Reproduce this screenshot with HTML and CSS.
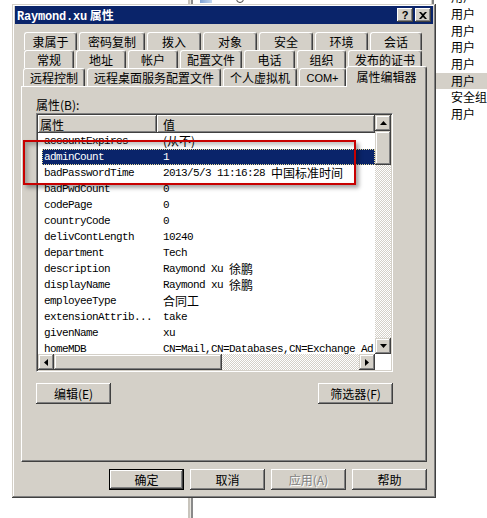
FILE: index.html
```html
<!DOCTYPE html>
<html>
<head>
<meta charset="utf-8">
<title>Raymond.xu 属性</title>
<link rel="stylesheet" href="styles.css">
</head>
<body>
<div class="desk">
  <div class="bg-split"></div>
  <div class="bg-icon"></div>
  <div class="bg-arc"></div>
  <div class="bg-edge"></div>
  <ul class="bg-list">
    <li>用户</li>
    <li>用户</li>
    <li>用户</li>
    <li>用户</li>
    <li>用户</li>
    <li class="sel">用户</li>
    <li>安全组</li>
    <li>用户</li>
  </ul>

  <div class="dialog">
    <div class="titlebar">
      <span class="title"><span class="t-en">Raymond.xu</span> 属性</span>
      <div class="tbtns">
        <span class="tb tb-q">?</span>
        <span class="tb tb-x"><svg width="8" height="7" viewBox="0 0 8 7"><path d="M0 0h2l2 2 2-2h2L5 3.5 8 7H6L4 5 2 7H0l3-3.5z" fill="#000"/></svg></span>
      </div>
    </div>

    <div class="tabs">
      <div class="tabrow">
        <span class="tab w53">隶属于</span>
        <span class="tab w66">密码复制</span>
        <span class="tab w54">拨入</span>
        <span class="tab w54">对象</span>
        <span class="tab w54">安全</span>
        <span class="tab w53">环境</span>
        <span class="tab w52">会话</span>
      </div>
      <div class="tabrow">
        <span class="tab w50">常规</span>
        <span class="tab w50">地址</span>
        <span class="tab w50">帐户</span>
        <span class="tab w62">配置文件</span>
        <span class="tab w51">电话</span>
        <span class="tab w49">组织</span>
        <span class="tab w74">发布的证书</span>
      </div>
      <div class="tabrow front">
        <span class="tab w62">远程控制</span>
        <span class="tab w134">远程桌面服务配置文件</span>
        <span class="tab w74">个人虚拟机</span>
        <span class="tab w47 latin">COM+</span>
        <span class="tab active">属性编辑器</span>
      </div>
    </div>

    <div class="panel">
      <div class="lbl">属性(B):</div>
      <div class="lv">
        <div class="lv-main">
          <div class="lv-head">
            <div class="hc c1">属性</div>
            <div class="hc c2">值</div>
          </div>
          <div class="lv-rows">
            <div class="row"><span class="n">accountExpires</span><span class="v"><span class="cj">(从不)</span></span></div>
            <div class="row sel"><span class="n">adminCount</span><span class="v">1</span></div>
            <div class="row"><span class="n">badPasswordTime</span><span class="v">2013/5/3 11:16:28&nbsp;<span class="cj">中国标准时间</span></span></div>
            <div class="row"><span class="n">badPwdCount</span><span class="v">0</span></div>
            <div class="row"><span class="n">codePage</span><span class="v">0</span></div>
            <div class="row"><span class="n">countryCode</span><span class="v">0</span></div>
            <div class="row"><span class="n">delivContLength</span><span class="v">10240</span></div>
            <div class="row"><span class="n">department</span><span class="v">Tech</span></div>
            <div class="row"><span class="n">description</span><span class="v">Raymond Xu&nbsp;<span class="cj">徐鹏</span></span></div>
            <div class="row"><span class="n">displayName</span><span class="v">Raymond xu&nbsp;<span class="cj">徐鹏</span></span></div>
            <div class="row"><span class="n">employeeType</span><span class="v"><span class="cj">合同工</span></span></div>
            <div class="row"><span class="n">extensionAttrib...</span><span class="v">take</span></div>
            <div class="row"><span class="n">givenName</span><span class="v">xu</span></div>
            <div class="row"><span class="n">homeMDB</span><span class="v">CN=Mail,CN=Databases,CN=Exchange Ad</span></div>
          </div>
        </div>
        <div class="vscroll">
          <span class="sbtn"><svg width="7" height="4" viewBox="0 0 7 4"><path d="M3.5 0L7 4H0z" fill="#000"/></svg></span>
          <span class="vthumb"></span>
          <span class="track"></span>
          <span class="sbtn"><svg width="7" height="4" viewBox="0 0 7 4"><path d="M0 0h7L3.5 4z" fill="#000"/></svg></span>
        </div>
        <div class="hscroll">
          <span class="sbtn"><svg width="4" height="7" viewBox="0 0 4 7"><path d="M4 0v7L0 3.5z" fill="#000"/></svg></span>
          <span class="hthumb"></span>
          <span class="track"></span>
          <span class="sbtn"><svg width="4" height="7" viewBox="0 0 4 7"><path d="M0 0l4 3.5L0 7z" fill="#000"/></svg></span>
        </div>
        <div class="corner"></div>
      </div>
      <div class="prow">
        <span class="btn">编辑(E)</span>
        <span class="btn">筛选器(F)</span>
      </div>
      <div class="mark"></div>
    </div>

    <div class="brow">
      <span class="btn def">确定</span>
      <span class="btn">取消</span>
      <span class="btn dis">应用(A)</span>
      <span class="btn">帮助</span>
    </div>
  </div>
</div>
</body>
</html>
```

FILE: styles.css
```css
html, body {
  margin: 0;
  padding: 0;
  background: #fff;
}

.desk {
  position: relative;
  width: 487px;
  height: 518px;
  overflow: hidden;
  background: #fff;
  font-family: "Noto Sans CJK SC", "Liberation Sans", sans-serif;
  font-size: 12px;
  color: #000;
  display: flex;
  align-items: flex-start;
}

/* ---------- background window bits ---------- */
.bg-split {
  position: absolute;
  left: 188px;
  top: 0;
  width: 5px;
  height: 518px;
  background: linear-gradient(to right, #c8c4bc 0 2px, #e8e6e0 2px 3px, #8a8a8a 3px 5px);
}
.bg-icon {
  position: absolute;
  left: 200px;
  top: 0;
  width: 12px;
  height: 3px;
  background: linear-gradient(to right, #7fa2d4, #c4d8f0);
}
.bg-arc {
  position: absolute;
  left: 236px;
  top: -5px;
  width: 6px;
  height: 6px;
  border: 1px solid #444;
  border-radius: 50%;
}
.bg-edge {
  position: absolute;
  left: 431px;
  top: 0;
  width: 3px;
  height: 5px;
  background: linear-gradient(to right, #d4d0c8 0 1px, #808080 1px 3px);
}
.bg-list {
  position: absolute;
  left: 436px;
  top: -10.8px;
  width: 51px;
  margin: 0;
  padding: 0;
  list-style: none;
  font-size: 12px;
}
.bg-list li {
  height: 16.7px;
  line-height: 16.7px;
  padding-left: 15px;
  white-space: nowrap;
  overflow: hidden;
}
.bg-list li.sel {
  background: #d4d0c8;
}

/* ---------- dialog ---------- */
.dialog {
  position: relative;
  z-index: 1;
  margin: 4px 0 0 12px;
  width: 424px;
  height: 494px;
  box-sizing: border-box;
  padding: 2px 3px 3px 3px;
  background: #d4d0c8;
  box-shadow: inset -1px -1px #404040, inset 1px 1px #d4d0c8, inset -2px -2px #808080, inset 2px 2px #fff;
  display: flex;
  flex-direction: column;
}

.titlebar {
  height: 18px;
  background: #0a246a;
  display: flex;
  align-items: center;
  justify-content: space-between;
  padding: 0 2px 0 2px;
}
.title {
  color: #fff;
  font-weight: bold;
  font-size: 12px;
  white-space: nowrap;
}
.t-en {
  font-family: "Liberation Mono", monospace;
  letter-spacing: -0.2px;
}
.tbtns {
  display: flex;
  gap: 2px;
}
.tb {
  width: 16px;
  height: 14px;
  box-sizing: border-box;
  background: #d4d0c8;
  box-shadow: inset -1px -1px #404040, inset 1px 1px #fff, inset -2px -2px #808080;
  display: flex;
  align-items: center;
  justify-content: center;
}
.tb-q {
  font-family: "Liberation Sans", sans-serif;
  font-weight: bold;
  font-size: 11px;
  line-height: 14px;
  padding-bottom: 1px;
}

/* ---------- tabs ---------- */
.tabs {
  margin: 8px 0 0 9px;
}
.tabrow {
  display: flex;
  height: 18px;
}
.tabrow.front {
  margin-left: -1px;
}
.tab {
  box-sizing: border-box;
  height: 18px;
  margin-right: 2px;
  border-top: 1px solid #fff;
  border-left: 1px solid #fff;
  border-right: 1px solid #404040;
  border-radius: 3px 3px 0 0;
  box-shadow: inset -1px 0 #808080;
  display: flex;
  align-items: center;
  justify-content: center;
  white-space: nowrap;
  font-size: 12px;
  background: #d4d0c8;
}
.tab.latin {
  font-family: "Liberation Sans", sans-serif;
  font-size: 11px;
}
.w47 { width: 47px; }
.w49 { width: 49px; }
.w50 { width: 50px; }
.w51 { width: 51px; }
.w52 { width: 52px; }
.w53 { width: 53px; }
.w54 { width: 54px; }
.w62 { width: 62px; }
.w66 { width: 66px; }
.w74 { width: 74px; }
.w134 { width: 134px; }
.tab.active {
  position: relative;
  z-index: 2;
  width: 81px;
  height: 21px;
  margin-top: -2px;
  margin-left: -2px;
  margin-right: 0;
  padding-bottom: 2px;
}

/* ---------- panel ---------- */
.panel {
  position: relative;
  margin-left: 6px;
  width: 406px;
  height: 376px;
  box-sizing: border-box;
  border-top: 1px solid #fff;
  border-left: 1px solid #fff;
  border-right: 1px solid #404040;
  border-bottom: 1px solid #404040;
  box-shadow: inset -1px -1px #808080;
  padding: 11px 32px 0 14px;
}
.lbl {
  height: 14px;
  line-height: 14px;
  margin-bottom: 1px;
  font-size: 12px;
}

.lv {
  width: 357px;
  height: 259px;
  box-sizing: border-box;
  border-top: 1px solid #808080;
  border-left: 1px solid #808080;
  border-right: 1px solid #fff;
  border-bottom: 1px solid #fff;
  box-shadow: inset 1px 1px #404040, inset -1px -1px #d4d0c8;
  padding: 1px;
  background: #fff;
  display: grid;
  grid-template-columns: 337px 16px;
  grid-template-rows: 239px 16px;
}
.lv-main {
  overflow: hidden;
}
.lv-head {
  display: flex;
  height: 18px;
}
.hc {
  box-sizing: border-box;
  height: 18px;
  background: #d4d0c8;
  box-shadow: inset -1px -1px #404040, inset 1px 1px #fff, inset -2px -2px #808080;
  display: flex;
  align-items: center;
  font-size: 12px;
}
.hc.c1 {
  width: 119px;
  padding-left: 2px;
}
.hc.c2 {
  flex: 1;
  padding-left: 6px;
}
.lv-rows {
  font-family: "Liberation Mono", monospace;
  font-size: 11px;
  letter-spacing: -0.6px;
}
.row {
  height: 16px;
  box-sizing: border-box;
  margin-left: 4px;
  padding-left: 2px;
  display: flex;
  align-items: center;
  white-space: nowrap;
  overflow: hidden;
}
.row .n {
  width: 119px;
  flex: none;
  line-height: 14px;
}
.row .v {
  flex: none;
  display: flex;
  align-items: center;
  line-height: 14px;
}
.row.sel {
  background: #0a246a;
  color: #fff;
  border: 1px dotted #e8dc9a;
  padding-left: 1px;
}
.cj {
  font-family: "Noto Sans CJK SC", sans-serif;
  font-size: 12px;
  letter-spacing: 0;
  line-height: 14px;
}

.vscroll {
  display: flex;
  flex-direction: column;
}
.hscroll {
  display: flex;
}
.sbtn {
  width: 16px;
  height: 16px;
  flex: none;
  box-sizing: border-box;
  background: #d4d0c8;
  box-shadow: inset -1px -1px #404040, inset 1px 1px #d4d0c8, inset -2px -2px #808080, inset 2px 2px #fff;
  display: flex;
  align-items: center;
  justify-content: center;
}
.vthumb {
  width: 16px;
  height: 34px;
  flex: none;
  background: #d4d0c8;
  box-shadow: inset -1px -1px #404040, inset 1px 1px #d4d0c8, inset -2px -2px #808080, inset 2px 2px #fff;
}
.hthumb {
  width: 168px;
  height: 16px;
  flex: none;
  background: #d4d0c8;
  box-shadow: inset -1px -1px #404040, inset 1px 1px #d4d0c8, inset -2px -2px #808080, inset 2px 2px #fff;
}
.track {
  flex: 1;
  background: repeating-conic-gradient(#d4d0c8 0 25%, #fff 0 50%) 0 0 / 2px 2px;
}
.corner {
  background: #fff;
}

.prow {
  margin-top: 11px;
  display: flex;
  justify-content: space-between;
  width: 357px;
}

.btn {
  width: 75px;
  height: 21px;
  box-sizing: border-box;
  background: #d4d0c8;
  box-shadow: inset -1px -1px #404040, inset 1px 1px #fff, inset -2px -2px #808080;
  display: flex;
  align-items: center;
  justify-content: center;
  font-size: 12px;
  white-space: nowrap;
}
.btn.def {
  border: 1px solid #000;
}
.btn.dis {
  color: #808080;
  text-shadow: 1px 1px #fff;
}

.brow {
  margin-top: 7px;
  display: flex;
  justify-content: flex-end;
  gap: 6px;
  padding-right: 6px;
}

.mark {
  position: absolute;
  left: 1px;
  top: 53px;
  width: 333px;
  height: 45px;
  box-sizing: border-box;
  border: 2px solid #c80000;
  box-shadow: 3px 3px 4px rgba(0, 0, 0, 0.35), inset 3px 3px 4px rgba(0, 0, 0, 0.25);
  pointer-events: none;
}
```
